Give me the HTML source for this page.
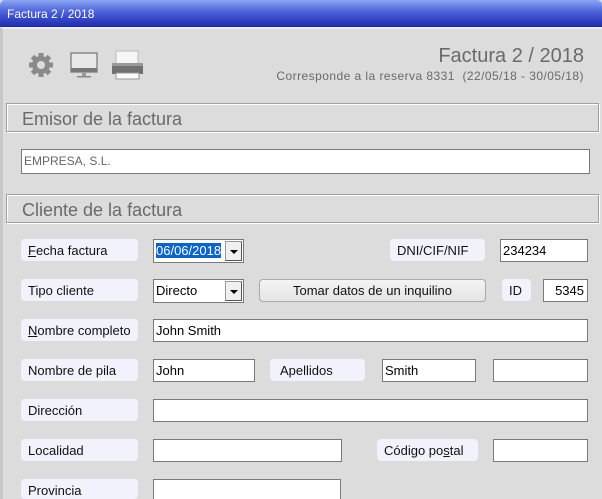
<!DOCTYPE html>
<html><head><meta charset="utf-8"><style>
*{margin:0;padding:0;box-sizing:border-box}
html{width:602px;height:499px;overflow:hidden}
body{width:602px;height:499px;overflow:hidden;background:#dcdcdc;font-family:"Liberation Sans",sans-serif;position:relative}
.title{position:absolute;left:0;top:0;width:602px;height:27px;background:linear-gradient(#8aa6f4,#4a60d8 45%,#1c2ab0);border-radius:5px 5px 0 0;color:#fff;font-size:12px;line-height:28px;padding-left:7px}
.frame{position:absolute;left:0;top:27px;width:602px;height:472px;border-left:3px solid #c8c8c8;border-top:2px solid #f0f0f0}
.abs{position:absolute}
.sec{position:absolute;left:6px;width:593px;height:29px;border:1px solid #a0a0a0;box-shadow:inset 1px 1px 0 #fff,1px 1px 0 #fff;font-size:18px;color:#6a6a6a;padding-left:15px;line-height:31px}
.lab{position:absolute;height:22px;background:#f2f2fc;border-radius:4px;font-size:13px;color:#111;padding-left:7px;line-height:23px}
.inp{position:absolute;height:23px;background:#fff;border:1px solid #7a7a7a;font-size:13px;color:#000;padding-left:2px;line-height:21px}
.cb{position:absolute;height:24px;background:#fff;border:1px solid #7a7a7a;font-size:13px;line-height:22px;padding-left:2px}
.cb .arr{position:absolute;right:1px;top:1px;width:17px;height:20px;background:#f0f0f0;border:1px solid #999;border-right-color:#555;border-bottom-color:#555}
.cb .arr:after{content:"";position:absolute;left:4px;top:8px;border-left:4px solid transparent;border-right:4px solid transparent;border-top:4px solid #000}
.btn{position:absolute;left:259px;top:279px;width:227px;height:23px;background:linear-gradient(#f4f4f4,#e4e4e4);border:1px solid #aaa;border-radius:4px;font-size:13px;text-align:center;line-height:21px;color:#111}
u{text-decoration:underline}
</style></head><body>
<div class="title">Factura 2 / 2018</div>
<div class="frame"></div>

<svg class="abs" style="left:27px;top:51px" width="30" height="30" viewBox="0 0 30 30">
<g fill="#8a8a8a"><circle cx="14" cy="14" r="9"/>
<g stroke="#8a8a8a" stroke-width="5"><line x1="14" y1="2" x2="14" y2="26"/><line x1="2" y1="14" x2="26" y2="14"/><line x1="5.5" y1="5.5" x2="22.5" y2="22.5"/><line x1="22.5" y1="5.5" x2="5.5" y2="22.5"/></g></g>
<circle cx="14" cy="14" r="4" fill="#dcdcdc"/></svg>
<svg class="abs" style="left:70px;top:52px" width="30" height="28"><rect x="1" y="1" width="26" height="19" fill="#e8e8e8" stroke="#8a8a8a" stroke-width="1.5"/><rect x="1" y="16" width="26" height="4" fill="#777"/><rect x="12" y="21" width="4" height="3" fill="#999"/><rect x="7" y="24" width="14" height="1.5" fill="#888"/></svg>
<svg class="abs" style="left:111px;top:50px" width="34" height="32"><rect x="5" y="1" width="22" height="14" fill="#f6f6f6" stroke="#bbb"/><rect x="1" y="13" width="31" height="11" fill="#707070"/><rect x="1" y="13" width="31" height="3" fill="#999"/><rect x="5" y="23" width="23" height="6" fill="#fafafa" stroke="#999"/></svg>

<div class="abs" style="right:18px;top:45px;font-size:20px;color:#6a6a6a">Factura 2 / 2018</div>
<div class="abs" style="right:18px;top:69px;font-size:12px;color:#6a6a6a;letter-spacing:0.45px">Corresponde a la reserva 8331&nbsp; (22/05/18 - 30/05/18)</div>

<div class="sec" style="top:103px">Emisor de la factura</div>
<div class="inp" style="left:21px;top:149px;width:569px;height:25px;color:#666;font-size:12px;line-height:22px">EMPRESA, S.L.</div>
<div class="sec" style="top:194px">Cliente de la factura</div>

<div class="lab" style="left:21px;top:239px;width:117px"><u>F</u>echa factura</div>
<div class="cb" style="left:153px;top:239px;width:91px"><span style="background:#0a64d0;color:#fff">06/06/2018</span><div class="arr"></div></div>
<div class="lab" style="left:390px;top:239px;width:95px">DNI/CIF/NIF</div>
<div class="inp" style="left:500px;top:239px;width:88px">234234</div>

<div class="lab" style="left:21px;top:279px;width:117px">Tipo cliente</div>
<div class="cb" style="left:153px;top:279px;width:91px">Directo<div class="arr"></div></div>
<div class="btn">Tomar datos de un inquilino</div>
<div class="lab" style="left:502px;top:279px;width:29px">ID</div>
<div class="inp" style="left:543px;top:279px;width:45px;text-align:right;padding-right:3px">5345</div>

<div class="lab" style="left:21px;top:319px;width:117px"><u>N</u>ombre completo</div>
<div class="inp" style="left:153px;top:319px;width:435px">John Smith</div>

<div class="lab" style="left:21px;top:359px;width:117px">Nombre de pila</div>
<div class="inp" style="left:153px;top:359px;width:102px">John</div>
<div class="lab" style="left:270px;top:359px;width:95px;padding-left:10px">Apellidos</div>
<div class="inp" style="left:382px;top:359px;width:94px">Smith</div>
<div class="inp" style="left:493px;top:359px;width:95px"></div>

<div class="lab" style="left:21px;top:399px;width:117px">Dirección</div>
<div class="inp" style="left:153px;top:399px;width:435px"></div>

<div class="lab" style="left:21px;top:439px;width:117px">Localidad</div>
<div class="inp" style="left:153px;top:439px;width:189px"></div>
<div class="lab" style="left:377px;top:439px;width:101px">Código po<u>s</u>tal</div>
<div class="inp" style="left:493px;top:439px;width:95px"></div>

<div class="lab" style="left:21px;top:479px;width:117px;height:20px">Provincia</div>
<div class="inp" style="left:153px;top:479px;width:188px;height:20px;border-bottom:none"></div>
</body></html>
